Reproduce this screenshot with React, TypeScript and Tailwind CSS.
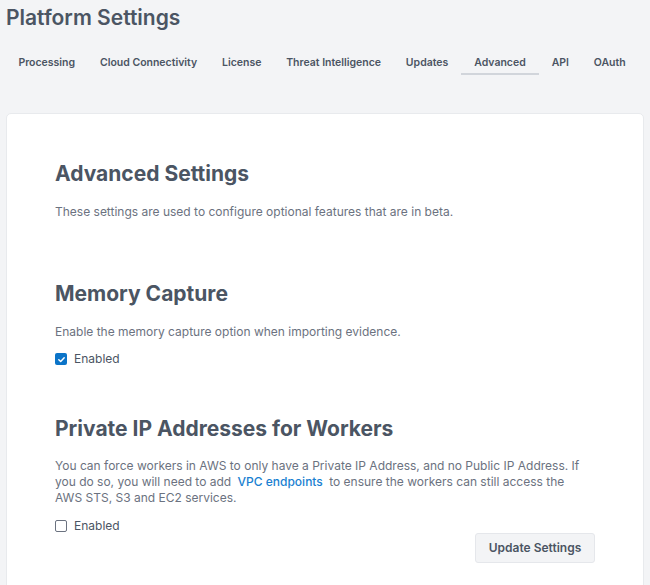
import React from 'react';

const tabs = ['Processing', 'Cloud Connectivity', 'License', 'Threat Intelligence', 'Updates', 'Advanced', 'API', 'OAuth'];

function Checkbox({ checked, label }: { checked: boolean; label: string }) {
  return (
    <label className="flex items-center gap-[7px] text-[12px] leading-[16px] text-[#4b5563]">
      {checked ? (
        <span className="w-[12px] h-[12px] rounded-[2px] bg-[#0b74c8] flex items-center justify-center">
          <svg width="9" height="9" viewBox="0 0 10 10" fill="none">
            <path d="M2 5.2 L4.1 7.2 L8 3" stroke="white" strokeWidth="1.6" strokeLinecap="round" strokeLinejoin="round" />
          </svg>
        </span>
      ) : (
        <span className="w-[12px] h-[12px] rounded-[2px] border border-[#6b7280] bg-white" />
      )}
      {label}
    </label>
  );
}

export default function App() {
  return (
    <div className="min-h-[585px] bg-[#f3f4f6] px-[6px] pt-1 font-['Inter',sans-serif] overflow-hidden">
      {/* Header */}
      <h1 className="text-[21px] leading-[28px] font-semibold text-[#4b5563]">Platform Settings</h1>

      {/* Tabs */}
      <nav className="flex mt-[20px]">
        {tabs.map((tab) => (
          <div
            key={tab}
            className={`whitespace-nowrap pt-[3px] pb-[2px] text-[10.5px] leading-[16px] font-semibold text-[#4b5563] border-b-2 ${
              tab === 'Advanced' ? 'border-[#d1d5db] px-[13.5px]' : 'border-transparent px-[12.4px]'
            }`}
          >
            {tab}
          </div>
        ))}
      </nav>

      {/* Card */}
      <div className="mt-[38px] bg-white rounded-[5px] border border-[#e8eaed] px-[48px] pt-[46px] pb-10">
        <h2 className="text-[21px] leading-[28px] font-bold text-[#4b5563]">Advanced Settings</h2>
        <p className="mt-[15px] text-[12px] leading-[17px] text-[#6b7280]">
          These settings are used to configure optional features that are in beta.
        </p>

        <h2 className="mt-[60px] text-[21px] leading-[28px] font-bold text-[#4b5563]">Memory Capture</h2>
        <p className="mt-[15px] text-[12px] leading-[17px] text-[#6b7280]">
          Enable the memory capture option when importing evidence.
        </p>
        <div className="mt-[11px]">
          <Checkbox checked label="Enabled" />
        </div>

        <h2 className="mt-[48px] text-[21px] leading-[28px] font-bold text-[#4b5563]">Private IP Addresses for Workers</h2>
        <p className="mt-[15px] max-w-[534px] text-[12px] leading-[16px] text-[#6b7280]">
          You can force workers in AWS to only have a Private IP Address, and no Public IP Address. If you do so, you
          will need to add <span className="px-[3px] text-[#1a7fd1] font-medium">VPC endpoints</span> to ensure the
          workers can still access the AWS STS, S3 and EC2 services.
        </p>
        <div className="mt-[12px]">
          <Checkbox checked={false} label="Enabled" />
        </div>

        <div className="flex justify-end -mt-px">
          <button className="w-[120px] h-[30px] rounded-[3px] bg-[#f3f4f6] border border-[#e5e7eb] text-[12px] font-semibold text-[#4b5563]">
            Update Settings
          </button>
        </div>
      </div>
    </div>
  );
}
